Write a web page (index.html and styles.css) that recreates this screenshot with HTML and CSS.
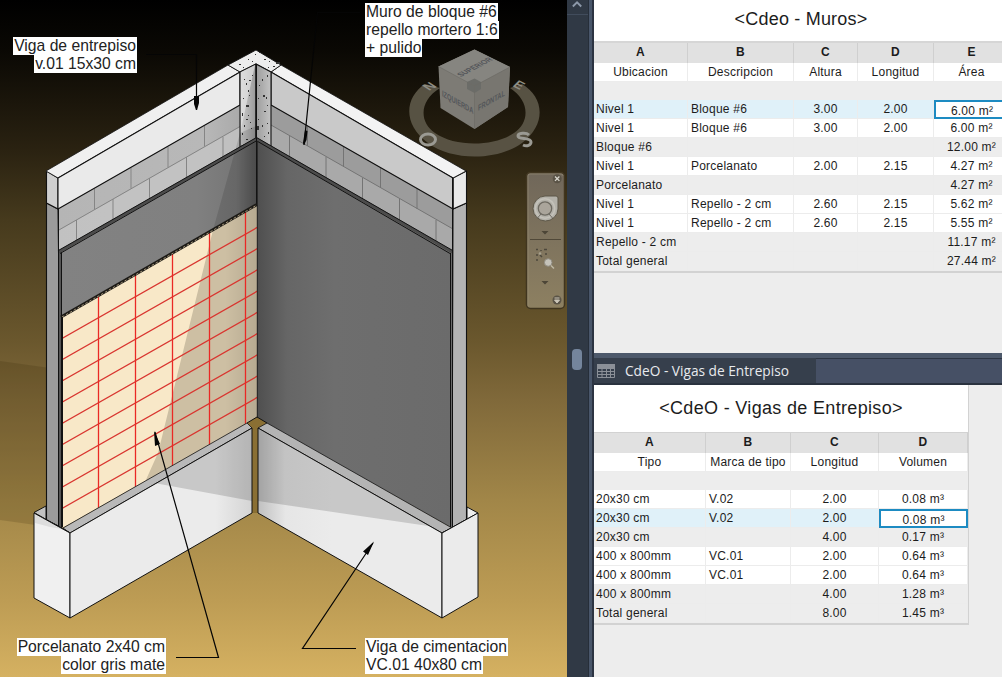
FILE: index.html
```html
<!DOCTYPE html>
<html lang="es">
<head>
<meta charset="utf-8">
<title>Vigas de Entrepiso</title>
<link rel="stylesheet" href="styles.css">
</head>
<body>
<main class="app">
  <section class="viewport">
    <svg class="scene" width="567" height="677" viewBox="0 0 567 677">
      <defs>
        <linearGradient id="wallL" x1="0" x2="1" y1="0" y2="0"><stop offset="0" stop-color="#828282"/><stop offset=".7" stop-color="#808080"/><stop offset=".9" stop-color="#767676"/><stop offset="1" stop-color="#565656"/></linearGradient>
        <linearGradient id="wallR" x1="0" x2="1" y1="0" y2="0"><stop offset="0" stop-color="#4e4e4e"/><stop offset=".16" stop-color="#666"/><stop offset=".4" stop-color="#6e6e6e"/><stop offset="1" stop-color="#6b6b6b"/></linearGradient>
        <linearGradient id="blockL" x1="0" x2="1" y1="0" y2="0"><stop offset="0" stop-color="#b5b5b5"/><stop offset=".8" stop-color="#b8b8b8"/><stop offset="1" stop-color="#aaa"/></linearGradient>
        <linearGradient id="footR" x1="0" x2="1" y1="0" y2="0"><stop offset="0" stop-color="#c0c0c0"/><stop offset=".15" stop-color="#e6e6e6"/><stop offset=".4" stop-color="#ebebeb"/></linearGradient>
        <linearGradient id="footL" x1="0" x2="1" y1="0" y2="0"><stop offset=".8" stop-color="#ebebeb"/><stop offset="1" stop-color="#d4d4d4"/></linearGradient>
        <linearGradient id="colL" x1="0" x2="1" y1="0" y2="0"><stop offset="0" stop-color="#d0d0d0"/><stop offset="1" stop-color="#989898"/></linearGradient>
        <linearGradient id="colR" x1="0" x2="1" y1="0" y2="0"><stop offset="0" stop-color="#9c9c9c"/><stop offset="1" stop-color="#c4c4c4"/></linearGradient>
        <linearGradient id="edge" x1="0" x2="1" y1="0" y2="0"><stop offset="0" stop-color="#000" stop-opacity="0"/><stop offset="1" stop-color="#000" stop-opacity=".2"/></linearGradient>
        <linearGradient id="nav" x1="0" x2="0" y1="0" y2="1"><stop offset="0" stop-color="#70675a"/><stop offset="1" stop-color="#8d8061"/></linearGradient>
        <clipPath id="tiles"><polygon points="62.500,317 257,205 257,418 62.500,528"/></clipPath>
        <clipPath id="fl"><polygon points="70,533 252,428 252,513 70,618"/></clipPath>
        <clipPath id="fr"><polygon points="258,428 442,533 442,618 258,513"/></clipPath>
      </defs>

      <polygon points="0,361 50,368 50,527 0,520" fill="#2b1c00" opacity=".16"/>

      <!-- wall end strips -->
      <g stroke="#111" stroke-width="1.100" stroke-linejoin="round">
        <polygon points="46.500,203 58,209 62,528 46.500,520" fill="#9b9b9b"/>
        <polygon points="453,209 466.500,203 466.500,520 452,528" fill="#b3b3b3"/>
        <polygon points="46.500,171 58,178 58,209 46.500,203" fill="#cfcfcf"/>
        <polygon points="453,178 466.500,171 466.500,203 453,209" fill="#e9e9e9"/>
      </g>

      <!-- block courses -->
      <polygon points="58,209 240,105 240,149 58,252" fill="url(#blockL)"/>
      <polygon points="58,231 240,127 240,149 58,252" fill="#c5c5c5" opacity=".75"/>
      <polygon points="271,105 453,209 453,252 271,148" fill="#9c9c9c"/>
      <polygon points="271,125 453,229 453,252 271,148" fill="#a9a9a9"/>
      <g stroke="#858585" fill="none">
        <path d="M58 230.500 240 126.500M94.500 189v20.500M131 168v20.500M168 147v20.500M204.500 126v20.500M76.500 220v21M113 199v21M149.500 178v21M186.500 157v21M223 137v21"/>
        <path stroke="#747474" d="M271 125 453 229M307.500 126v20M343.500 147v20M380.500 168v20M417 189v20M289.500 136v21M326 157v21M362.500 178v21M399.500 199v21M436 220v21"/>
      </g>

      <!-- beams -->
      <g stroke="#111" stroke-width="1.100" stroke-linejoin="round">
        <polygon points="46,171 228,65 240,72 58,178" fill="#f0f0f0" stroke-width=".8"/>
        <polygon points="58,178 240,72 240,105 58,209" fill="#eaeaea"/>
        <polygon points="466,171 281,65 271,72 453,178" fill="#f3f3f3" stroke-width=".8"/>
        <polygon points="271,72 453,178 453,209 271,105" fill="#c9c9c9"/>
        <polygon points="228,65 256,50 281,65 271,72 256,64 240,72" fill="#ededed" stroke-width=".9"/>
        <polygon points="240,72 256,64 256,139 240,147" fill="url(#colL)"/>
        <polygon points="256,64 271,72 271,147 256,139" fill="url(#colR)"/>
      </g>
      <polygon points="241,72 255,65 241,129" fill="#e6e6e6" opacity=".65"/>
      <g fill="#333">
        <path d="M246 83h1v2h-1zM252 75h1v1h-1zM244 79h1v1h-1zM249 80h2v1h-2zM248 90h1v2h-1zM243 98h1v1h-1zM246 105h3v2h-3zM249 95h1v1h-1zM242 113h1v3h-1zM246 119h2v1h-2zM248 115h1v1h-1zM244 125h1v2h-1zM250 122h1v1h-1zM242 133h1v2h-1zM246 139h2v1h-2zM251 128h1v1h-1zM262 79h1v2h-1zM267 75h1v2h-1zM259 85h1v1h-1zM263 95h2v2h-2zM266 97h1v2h-1zM258 98h1v1h-1zM267 105h1v1h-1zM264 111h2v1h-2zM258 119h1v1h-1zM257 126h2v4h-2zM262 125h1v2h-1zM267 123h1v1h-1zM264 136h1v1h-1zM268 132h1v2h-1zM255 54h1v1h-1zM248 59h1v1h-1zM264 59h2v1h-2zM252 61h1v1h-1zM269 61h1v1h-1zM259 52h1v1h-1zM239 64h2v1h-2zM243 67h1v1h-1zM273 66h2v1h-2zM276 62h4v2h-4zM268 67h1v1h-1z"/>
      </g>

      <!-- plaster -->
      <polygon points="59,253 256,140 256,418 59,528" fill="url(#wallL)"/>
      <polygon points="256,140 452,253 452,528 256,418" fill="url(#wallR)"/>
      <polygon points="240,133 256,126 256,205 213,230" fill="#000" opacity=".12"/>
      <polygon points="59,253 62,251 62,528 59,526" fill="#555"/>
      <path d="M58.500 252 256.500 139 452.500 252" fill="none" stroke="#4c4c4c" stroke-width="3"/>
      <path d="M58 250.700 256.500 137.500 453 250.700M60 253.500 256.500 140.800 450 253.500" fill="none" stroke="#111"/>
      <path d="M58.500 209V526M61.500 253V528M256.500 64V418M450.500 253V527M452.500 178V528" stroke="#111" fill="none"/>

      <!-- porcelain tiles -->
      <polygon points="62.500,317 257,205 257,418 62.500,528" fill="#f8e8c8"/>
      <polygon points="213,230 257,205 257,418 145,482 158,453" fill="#cdbfa3"/>
      <rect x="225" y="200" width="32" height="240" fill="url(#edge)" opacity=".55" clip-path="url(#tiles)"/>
      <g clip-path="url(#tiles)" stroke="#ea2925" stroke-width="1.300" fill="none">
        <path stroke="#d93630" d="M62 338.500 258 227M62 359.750 258 248.250M62 381 258 269.500M62 402.250 258 290.750M62 423.500 258 312M62 444.750 258 333.250M62 466 258 354.500M62 487.250 258 375.750M62 508.500 258 397"/>
        <path d="M98.500 290V520M135.500 270V500M172.500 250V480M209.500 230V460M245.500 208V440"/>
      </g>
      <path d="M61 317 257 204.500" stroke="#1c1a16" stroke-width="3"/>
      <path d="M62 317 257 205" stroke="#a6977a" stroke-dasharray="2.500 2"/>
      <path d="M62.500 317V527" stroke="#111"/>
      <path d="M257.300 141V418" stroke="#222"/>

      <!-- foundation beams -->
      <polygon points="247,423 257,417 267,423 258,428 258,513 252,513 252,428" fill="#8a6f33"/>
      <g stroke="#111" stroke-width="1" stroke-linejoin="round">
        <polygon points="63,528 247,423 252,428 70,533" fill="#b9b9b9" stroke-width=".8"/>
        <polygon points="267,423 452,528 442,533 258,428" fill="#b4b4b4" stroke-width=".8"/>
        <polygon points="34,512.500 46,506 46,520 62,528 70,533" fill="#c2c2c2"/>
        <polygon points="34,513 70,533 70,618 34,598" fill="#f0f0f0"/>
        <polygon points="70,533 252,428 252,513 70,618" fill="url(#footL)"/>
        <polygon points="258,428 442,533 442,618 258,513" fill="url(#footR)"/>
        <polygon points="442,533 452,528 467,519 467,507 478,513" fill="#eee"/>
        <polygon points="442,533 478,513 478,597 442,618" fill="#ebebeb"/>
      </g>
      <polygon clip-path="url(#fl)" points="138,480 252,501 252,420 140,480" fill="#000" opacity=".15"/>
      <polygon clip-path="url(#fr)" points="258,501 442,528 442,533 258,420" fill="#000" opacity=".15"/>
      <polygon points="35,514 46,520 62,529 50,527 35,523" fill="#000" opacity=".08"/>
      <path d="M46.500 203V520M466.500 203V519M247 423 257 417 267 423" fill="none" stroke="#111"/>

      <!-- leaders -->
      <g fill="none" stroke="#050505" stroke-width="1.200">
        <path d="M146 54.500H196.500V110M360 12.500H317.500L304 145M176 657.500H218.500L155 432M356 648.500H302.500L373 543"/>
      </g>
      <path d="M194 96h5v7l-2 7h-1l-2-6zM305 130l2.500 1-1 9-2.500 5-1-2zM154 431l6 13-5 2zM374 541.500l-11 10 5 3.500z" fill="#050505"/>

      <!-- view cube -->
      <path fill="#5b5547" opacity=".95" d="M425 84C405 97 402 124 428 143C452 161 497 161 522 143C547 124 544 97 522 84L510 88C530 101 530 122 514 133C493 147 455 147 435 133C419 122 419 101 440 88Z"/>
      <path d="M438.500 66.500 474.500 49.500 510 67 508 107 474.500 129 440.500 108Z" fill="#7d7b75"/>
      <path d="M438.500 66.500 474.500 49.500 510 67 474.500 86Z" fill="#868580"/>
      <path d="M474.500 86 510 67 508 107 474.500 129Z" fill="#787670"/>
      <path d="M467 82 474.500 78.500 481 82 481 89 474.500 93 467 89Z" fill="#6b6c68"/>
      <path d="M438.500 66.500 474.500 86 510 67M474.500 86V129" fill="none" stroke="#6d6c66" stroke-width=".7"/>
      <g class="cube-text">
        <text transform="matrix(.87 -.46 .8 .5 461 77)" textLength="37" lengthAdjust="spacingAndGlyphs">SUPERIOR</text>
        <text transform="matrix(.87 .5 0 1 442 96)" textLength="36" lengthAdjust="spacingAndGlyphs">IZQUIERDA</text>
        <text transform="matrix(.87 -.5 0 1 478 111)" textLength="31" lengthAdjust="spacingAndGlyphs">FRONTAL</text>
      </g>
      <g class="compass">
        <text transform="matrix(.8 -.4 .75 .5 429 91)">N</text>
        <text transform="matrix(.8 .4 -.6 .6 512 86)">E</text>
        <ellipse cx="428" cy="139.500" rx="7.500" ry="5.500"/>
        <path d="M529 135c-3-3-11-2-11 1 0 4 13 1 13 6 0 3-4 5-8 3"/>
      </g>

      <!-- navigation bar -->
      <rect x="526.500" y="172.500" width="38" height="136" rx="4" fill="url(#nav)" stroke="#40351f" stroke-width="1.500"/>
      <path d="M528 306V176q0-2 2-2h31q2 0 2 2" fill="none" stroke="#9a9078" stroke-width=".7" opacity=".8"/>
      <circle cx="557.200" cy="178.700" r="4.500" fill="#5a5346"/>
      <path d="M555 176.500l4.400 4.400m0-4.400-4.400 4.400" stroke="#d8d5cc" stroke-width="1.300"/>
      <path d="M545 196h11q2 0 2 2v11a12.500 12.500 0 1 1-13-13z" fill="#b4b2aa" stroke="#5d5748"/>
      <circle cx="545" cy="208.500" r="6.700" fill="#aaa59b" stroke="#6d6a61" stroke-width="1.300"/>
      <circle cx="545" cy="208.500" r="9.700" fill="none" stroke="#c4c2ba" stroke-width="1.500"/>
      <path d="M541 214l-3.500 4m11.500-4 3.500 4" stroke="#6d6a61"/>
      <path d="M541.500 231h7l-3.500 3.500zM541.500 281h7l-3.500 3.500z" fill="#4d4637"/>
      <path d="M530 239.500h31" stroke="#504838"/>
      <path d="M536 249.500h2M544 249.500h3M536 260h2M540 255l2 2M546 253v2M541 250v1M537 254v2" fill="none" stroke="#4d483c" stroke-width="1.500"/>
      <circle cx="540" cy="253.500" r="1.300" fill="#a7a18f"/>
      <circle cx="548.200" cy="262.500" r="3.800" fill="#c5c3ba" stroke="#8f8b80"/>
      <path d="M551 265.500l3 3" stroke="#beb8a4" stroke-width="1.500"/>
      <circle cx="557" cy="300" r="4.500" fill="#5a5346"/>
      <path d="M554.500 298h5M554.500 300h5l-2.500 3z" stroke="#cbc6b8" fill="#cbc6b8"/>
    </svg>
    <p class="note note-beam"><span>Viga de entrepiso</span><br><span>v.01 15x30 cm</span></p>
    <p class="note note-wall"><span>Muro de bloque #6</span><br><span>repello mortero 1:6</span><br><span>+ pulido</span></p>
    <p class="note note-tile"><span>Porcelanato 2x40 cm</span><br><span>color gris mate</span></p>
    <p class="note note-foot"><span>Viga de cimentacion</span><br><span>VC.01 40x80 cm</span></p>
  </section>

  <div class="scrollbar">
    <svg class="scroll-up" width="21" height="15" viewBox="0 0 21 15"><path d="M5.500 7l4.500-4.500L14.500 7" fill="none" stroke="#8d99aa" stroke-width="2"/></svg>
    <div class="thumb"></div>
  </div>
  <div class="splitter"></div>

  <section class="panels">
    <div class="panel panel-walls">
      <div class="sheet walls">
        <h1 class="title">&lt;Cdeo - Muros&gt;</h1>
        <div class="row letters"><span>A</span><span>B</span><span>C</span><span>D</span><span>E</span></div>
        <div class="row names"><span>Ubicacion</span><span>Descripcion</span><span>Altura</span><span>Longitud</span><span>Área</span></div>
        <div class="row blank"></div>
        <div class="row active"><span>Nivel 1</span><span>Bloque #6</span><span>3.00</span><span>2.00</span><span class="picked">6.00 m²</span></div>
        <div class="row"><span>Nivel 1</span><span>Bloque #6</span><span>3.00</span><span>2.00</span><span>6.00 m²</span></div>
        <div class="row sum"><span>Bloque #6</span><span></span><span></span><span></span><span>12.00 m²</span></div>
        <div class="row"><span>Nivel 1</span><span>Porcelanato</span><span>2.00</span><span>2.15</span><span>4.27 m²</span></div>
        <div class="row sum"><span>Porcelanato</span><span></span><span></span><span></span><span>4.27 m²</span></div>
        <div class="row"><span>Nivel 1</span><span>Repello - 2 cm</span><span>2.60</span><span>2.15</span><span>5.62 m²</span></div>
        <div class="row"><span>Nivel 1</span><span>Repello - 2 cm</span><span>2.60</span><span>2.15</span><span>5.55 m²</span></div>
        <div class="row sum"><span>Repello - 2 cm</span><span></span><span></span><span></span><span>11.17 m²</span></div>
        <div class="row sum"><span>Total general</span><span></span><span></span><span></span><span>27.44 m²</span></div>
      </div>
    </div>
    <div class="tabs">
      <div class="tab">
        <svg width="18" height="14" viewBox="0 0 18 14"><path d="M.5.500h17v13H.5zM.5 4.500h17M.5 7.500h17M.5 10.500h17M5 4v9.500M9.500 4v9.500M13.500 4v9.500" fill="none" stroke="#8b9098"/><path d="M0 0h18v4H0z" fill="#8b9098"/></svg>
        <span>CdeO - Vigas de Entrepiso</span>
      </div>
    </div>
    <div class="panel">
      <div class="sheet beams">
        <h1 class="title">&lt;CdeO - Vigas de Entrepiso&gt;</h1>
        <div class="row letters"><span>A</span><span>B</span><span>C</span><span>D</span></div>
        <div class="row names"><span>Tipo</span><span>Marca de tipo</span><span>Longitud</span><span>Volumen</span></div>
        <div class="row blank"></div>
        <div class="row"><span>20x30 cm</span><span>V.02</span><span>2.00</span><span>0.08 m³</span></div>
        <div class="row active"><span>20x30 cm</span><span>V.02</span><span>2.00</span><span class="picked">0.08 m³</span></div>
        <div class="row sum"><span>20x30 cm</span><span></span><span>4.00</span><span>0.17 m³</span></div>
        <div class="row"><span>400 x 800mm</span><span>VC.01</span><span>2.00</span><span>0.64 m³</span></div>
        <div class="row"><span>400 x 800mm</span><span>VC.01</span><span>2.00</span><span>0.64 m³</span></div>
        <div class="row sum"><span>400 x 800mm</span><span></span><span>4.00</span><span>1.28 m³</span></div>
        <div class="row sum"><span>Total general</span><span></span><span>8.00</span><span>1.45 m³</span></div>
      </div>
    </div>
  </section>
</main>
</body>
</html>
```
FILE: styles.css
```css
* { box-sizing: border-box; }
body { margin: 0; font-family: "Liberation Sans", Arial, sans-serif; color: #1c1c1c; }
.app { display: flex; width: 1002px; height: 677px; overflow: hidden; background: #ededed; }

.viewport {
  position: relative;
  flex: 0 0 567px;
  background: linear-gradient(#000 0, #0a0804 50px, #2a2211 150px, #463a1d 220px, #6a572d 340px, #80693a 400px, #a18648 500px, #bd9c54 600px, #d5b161 677px);
}
.scene { display: block; }
.note { position: absolute; margin: 0; font-size: 15.7px; line-height: 18px; white-space: nowrap; color: #222; }
.note span { display: inline-block; background: #fff; padding: 0 1px; height: 18px; }
.note-beam { right: 430px; top: 37px; text-align: right; }
.note-wall { left: 365px; top: 3px; }
.note-tile { right: 401px; top: 638px; text-align: right; }
.note-foot { left: 365px; top: 638px; }
.cube-text text { font-size: 8.5px; font-weight: bold; fill: #54565a; }
.compass text { font-size: 15px; font-weight: bold; fill: #8f8d84; }
.compass ellipse, .compass path { fill: none; stroke: #9b9a93; stroke-width: 3px; }

.scrollbar { flex: 0 0 21px; background: #303945; display: flex; flex-direction: column; align-items: center; }
.scroll-up { display: block; border-bottom: 1px solid #414c5c; margin-bottom: 334px; }
.thumb { width: 10px; height: 21px; border-radius: 4px; background: #74859c; margin-right: 2px; }
.splitter { flex: 0 0 6px; background: linear-gradient(90deg, #262e39 0 1px, #49566a 1px 4px, #2c3442 4px 6px); }

.panels { flex: 1; min-width: 0; display: flex; flex-direction: column; }
.panel { overflow: hidden; flex: 1; }
.panel-walls { flex: 0 0 353px; }
.tabs { flex: 0 0 32px; display: flex; background: #465065; border-top: 5px solid #4d596b; border-bottom: 2px solid #2a323f; box-shadow: inset 0 1px #2d3543; }
.tab { width: 222px; display: flex; align-items: center; gap: 10px; padding-left: 3px; background: #363f4c; color: #e8eaee; font: 13.7px/20px "Open Sans", "Noto Sans", sans-serif; white-space: nowrap; }

.title { margin: 0; display: flex; align-items: center; justify-content: center; background: #fff; font-weight: 400; font-size: 18px; letter-spacing: .33px; }
.sheet { border-bottom: 2px solid #d2d2d2; font-size: 12px; letter-spacing: .22px; }
.walls { width: 416px; }
.walls .title { height: 43px; padding-right: 2px; padding-bottom: 2px; border-bottom: 2px solid #d6d6d6; letter-spacing: .2px; }
.walls .row { grid-template-columns: 94px 106px 64px 76px 76px; }
.beams { width: 375px; border-right: 1px solid #d2d2d2; }
.beams .title { height: 48px; border-bottom: 1px solid #d2d2d2; }
.beams .row { grid-template-columns: 112px 85px 88px 89px; }
.row { display: grid; grid-template-rows: 100%; height: 19px; line-height: 18px; background: #fff; }
.row span { border-right: 1px solid #ececec; border-bottom: 1px solid #ececec; text-align: center; white-space: nowrap; }
.row span:nth-child(1), .row span:nth-child(2) { text-align: left; padding-left: 3px; }
.row span:nth-child(1) { padding-left: 2px; }
.row.letters { height: 20px; line-height: 19px; background: #e1e1e1; font-weight: bold; }
.row.letters span { border-color: #cfcfcf; border-bottom: 0; }
.row.names span, .row.letters span { text-align: center; padding-left: 0; }
.row.blank { height: 18px; }
.row.blank, .row.sum { background: #ededed; }
.row.active { background: #e0f1f9; }
.row .picked { background: #fff; border: 2px solid #1d8bc2; line-height: 18px; }
```
